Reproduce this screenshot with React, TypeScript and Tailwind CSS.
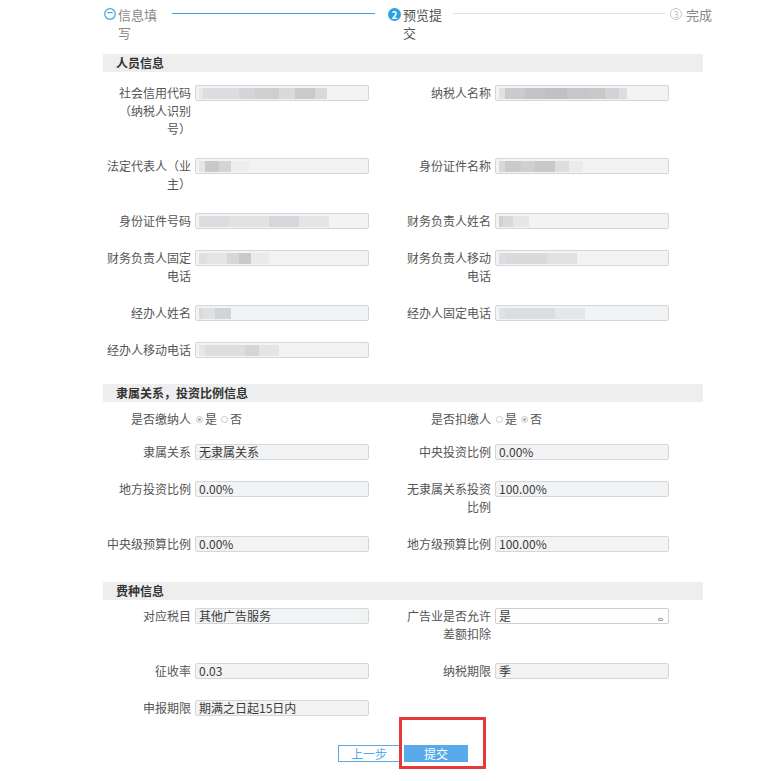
import React from 'react';

type Seg = [number, string];

interface FieldProps {
  label?: string;
  value?: string;
  blur?: Seg[];
  select?: boolean;
}

const Field: React.FC<FieldProps> = ({ label, value, blur, select }) => {
  if (!label) return <div />;
  return (
    <div className="flex items-start pl-[3px]">
      <div className="w-[85px] shrink-0 text-right leading-[18px] text-[#555]">{label}</div>
      <div
        className={
          select
            ? 'relative ml-[4px] mt-[1px] flex h-[16px] w-[174px] items-center overflow-hidden rounded-[2px] border border-[#cfcfcf] bg-white pl-[3px] leading-[14px] text-[#3a3a3a]'
            : 'ml-[4px] mt-[1px] flex h-[16px] w-[174px] items-center overflow-hidden rounded-[2px] border border-[#d6d6d6] bg-[#f2f3f5] pl-[3px] leading-[14px] text-[#3a3a3a]'
        }
      >
        {value}
        {blur && (
          <div className="flex h-[11px] items-stretch">
            {blur.map(([w, c], i) => (
              <span key={i} style={{ width: w, background: c }} />
            ))}
          </div>
        )}
        {select && (
          <span className="absolute bottom-[2px] right-[5px] h-[3px] w-[5px] rounded-[1px] border border-[#999]" />
        )}
      </div>
    </div>
  );
};

const Row: React.FC<{ left: FieldProps; right?: FieldProps }> = ({ left, right }) => (
  <div className="mb-[19px] grid grid-cols-2">
    <Field {...left} />
    <Field {...(right || {})} />
  </div>
);

const Header: React.FC<{ title: string }> = ({ title }) => (
  <div className="h-[18px] bg-[#eeeeee] pl-[13px] font-bold leading-[18px] text-[#333]">{title}</div>
);

const Radio: React.FC<{ checked?: boolean }> = ({ checked }) => (
  <span className="flex h-[7px] w-[7px] items-center justify-center rounded-full border border-[#c8c8c8] bg-white">
    {checked && <span className="h-[3px] w-[3px] rounded-full bg-[#a8a8a8]" />}
  </span>
);

const RadioField: React.FC<{ label: string; yes: boolean }> = ({ label, yes }) => (
  <div className="flex items-center pl-[3px] leading-[18px] text-[#555]">
    <div className="w-[85px] shrink-0 text-right">{label}</div>
    <div className="ml-[5px] flex items-center gap-[2px]">
      <Radio checked={yes} />
      <span className="mr-[2px]">是</span>
      <Radio checked={!yes} />
      <span>否</span>
    </div>
  </div>
);

const App: React.FC = () => {
  return (
    <div className="relative min-h-screen w-[782px] bg-white font-['Microsoft_YaHei','Noto_Sans_CJK_SC',sans-serif] text-[12px]">
      {/* steps */}
      <div className="ml-[104px] flex items-start pt-[6px]">
        <svg width="12" height="12" viewBox="0 0 12 12" className="mt-[2px] shrink-0">
          <circle cx="6" cy="6" r="5.3" fill="none" stroke="#3ba3e3" strokeWidth="1.2" />
          <path d="M3.4 4.6h5.2" fill="none" stroke="#3ba3e3" strokeWidth="1.2" />
        </svg>
        <div className="ml-[2px] w-[40px] text-[13px] leading-[18px] text-[#888]">信息填写</div>
        <div className="ml-[14px] mr-[13px] mt-[7px] h-[1px] w-[203px] bg-[#3ba3e3]" />
        <span className="mt-[2px] flex h-[13px] w-[13px] shrink-0 items-center justify-center rounded-full bg-[#2d9fe3] text-[10px] font-bold leading-none text-white">
          2
        </span>
        <div className="ml-[2px] w-[40px] text-[13px] leading-[18px] text-[#555]">预览提交</div>
        <div className="ml-[10px] mr-[5px] mt-[7px] h-[1px] w-[212px] bg-[#e2e2e2]" />
        <span className="mt-[2px] flex h-[12px] w-[12px] shrink-0 items-center justify-center rounded-full border border-[#c8c8c8] text-[9px] leading-none text-[#bbb]">
          3
        </span>
        <div className="ml-[4px] text-[13px] leading-[18px] text-[#888]">完成</div>
      </div>

      <div className="ml-[103px] mt-[12px] w-[600px]">
        <Header title="人员信息" />
        <div className="pb-[6px] pt-[12px]">
          <Row
            left={{
              label: '社会信用代码（纳税人识别号）',
              blur: [[4, '#e6e7e9'], [36, '#dcdde0'], [16, '#d4d5d8'], [24, '#cdcfd1'], [16, '#d9dadc'], [20, '#c9cacc'], [12, '#d8d9db']],
            }}
            right={{
              label: '纳税人名称',
              blur: [[6, '#e0e1e3'], [20, '#c9cbce'], [20, '#c2c4c7'], [22, '#bfc1c4'], [20, '#c5c7ca'], [18, '#c9c9cb'], [14, '#d2d3d6'], [8, '#dcdde0']],
            }}
          />
          <Row
            left={{ label: '法定代表人（业主）', blur: [[6, '#e4e5e7'], [14, '#c8c9cb'], [12, '#d3d4d6'], [18, '#eceded']] }}
            right={{
              label: '身份证件名称',
              blur: [[6, '#d7d8da'], [16, '#c9cacc'], [14, '#ced0d2'], [20, '#c6c8ca'], [14, '#dddee0'], [14, '#eaebec']],
            }}
          />
          <Row
            left={{ label: '身份证件号码', blur: [[30, '#dcdde0'], [40, '#e1e2e4'], [30, '#d6d7da'], [30, '#e3e4e6']] }}
            right={{ label: '财务负责人姓名', blur: [[4, '#d0d1d3'], [10, '#d9dadc'], [16, '#e6e7e8']] }}
          />
          <Row
            left={{
              label: '财务负责人固定电话',
              blur: [[8, '#dedfe1'], [20, '#e3e4e5'], [12, '#d6d7d9'], [12, '#c8c9cb'], [18, '#e9eaeb']],
            }}
            right={{ label: '财务负责人移动电话', blur: [[8, '#dcdde0'], [40, '#d9dadc'], [30, '#e1e2e4']] }}
          />
          <Row
            left={{ label: '经办人姓名', blur: [[4, '#d8d9db'], [12, '#dfe0e2'], [16, '#d2d3d5']] }}
            right={{ label: '经办人固定电话', blur: [[6, '#e0e1e3'], [50, '#dcdde0'], [30, '#e6e7e9']] }}
          />
          <Row
            left={{ label: '经办人移动电话', blur: [[6, '#e6e7e9'], [40, '#dddee0'], [14, '#d4d5d7'], [20, '#e4e5e7']] }}
          />
        </div>

        <Header title="隶属关系，投资比例信息" />
        <div className="pb-[10px] pt-[8px]">
          <div className="mb-[15px] grid grid-cols-2">
            <RadioField label="是否缴纳人" yes={true} />
            <RadioField label="是否扣缴人" yes={false} />
          </div>
          <Row left={{ label: '隶属关系', value: '无隶属关系' }} right={{ label: '中央投资比例', value: '0.00%' }} />
          <Row left={{ label: '地方投资比例', value: '0.00%' }} right={{ label: '无隶属关系投资比例', value: '100.00%' }} />
          <Row left={{ label: '中央级预算比例', value: '0.00%' }} right={{ label: '地方级预算比例', value: '100.00%' }} />
        </div>

        <Header title="费种信息" />
        <div className="pb-[9px] pt-[7px]">
          <Row
            left={{ label: '对应税目', value: '其他广告服务' }}
            right={{ label: '广告业是否允许差额扣除', value: '是', select: true }}
          />
          <Row left={{ label: '征收率', value: '0.03' }} right={{ label: '纳税期限', value: '季' }} />
          <Row left={{ label: '申报期限', value: '期满之日起15日内' }} />
        </div>

        <div className="flex justify-center gap-[4px]">
          <button className="h-[17px] w-[62px] border border-[#5aa9e6] bg-white text-[12px] leading-[15px] text-[#5aa9e6]">
            上一步
          </button>
          <button className="h-[17px] w-[64px] bg-[#58aaea] text-[12px] leading-[17px] text-white">提交</button>
        </div>
      </div>

      <div className="absolute left-[399px] top-[717px] h-[52px] w-[87px] border-[3px] border-[#e63a3a]" />
    </div>
  );
};

export default App;
